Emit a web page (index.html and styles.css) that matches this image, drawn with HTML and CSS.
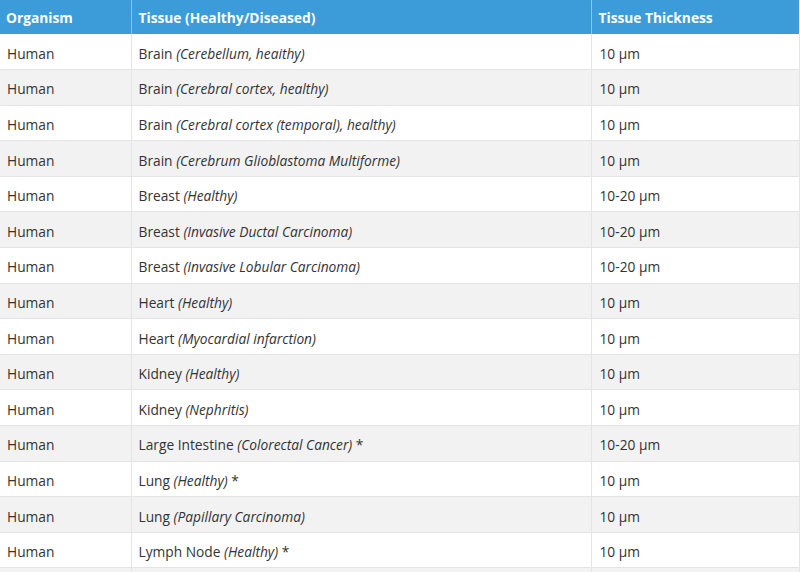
FILE: index.html
```html
<!DOCTYPE html>
<html>
<head>
<meta charset="utf-8">
<link rel="stylesheet" href="styles.css">
</head>
<body>
<table class="tissue-table">
  <colgroup>
    <col class="c1"><col class="c2"><col class="c3">
  </colgroup>
  <thead>
    <tr><th>Organism</th><th>Tissue (Healthy/Diseased)</th><th>Tissue Thickness</th></tr>
  </thead>
  <tbody>
    <tr><td>Human</td><td>Brain <em>(Cerebellum, heaithy)</em></td><td>10 µm</td></tr>
    <tr><td>Human</td><td>Brain <em>(Cerebral cortex, healthy)</em></td><td>10 µm</td></tr>
    <tr><td>Human</td><td>Brain <em>(Cerebral cortex (temporal), healthy)</em></td><td>10 µm</td></tr>
    <tr><td>Human</td><td>Brain <em>(Cerebrum Glioblastoma Multiforme)</em></td><td>10 µm</td></tr>
    <tr><td>Human</td><td>Breast <em>(Healthy)</em></td><td>10-20 µm</td></tr>
    <tr><td>Human</td><td>Breast <em>(Invasive Ductal Carcinoma)</em></td><td>10-20 µm</td></tr>
    <tr><td>Human</td><td>Breast <em>(Invasive Lobular Carcinoma)</em></td><td>10-20 µm</td></tr>
    <tr><td>Human</td><td>Heart <em>(Healthy)</em></td><td>10 µm</td></tr>
    <tr><td>Human</td><td>Heart <em>(Myocardial infarction)</em></td><td>10 µm</td></tr>
    <tr><td>Human</td><td>Kidney <em>(Healthy)</em></td><td>10 µm</td></tr>
    <tr><td>Human</td><td>Kidney <em>(Nephritis)</em></td><td>10 µm</td></tr>
    <tr><td>Human</td><td>Large Intestine <em>(Colorectal Cancer)</em> *</td><td>10-20 µm</td></tr>
    <tr><td>Human</td><td>Lung <em>(Healthy)</em> *</td><td>10 µm</td></tr>
    <tr><td>Human</td><td>Lung <em>(Papillary Carcinoma)</em></td><td>10 µm</td></tr>
    <tr><td>Human</td><td>Lymph Node <em>(Healthy)</em> *</td><td>10 µm</td></tr>
    <tr class="tail"><td></td><td></td><td></td></tr>
  </tbody>
</table>
</body>
</html>
```
FILE: styles.css
```css
html, body {
  margin: 0;
  padding: 0;
  background: #ffffff;
}
body {
  font-family: "Open Sans", "Liberation Sans", sans-serif;
  font-size: 13.75px;
  color: #333333;
  overflow: hidden;
}
.tissue-table {
  width: 799px;
  border-collapse: collapse;
  table-layout: fixed;
}
.c1 { width: 131px; }
.c2 { width: 460px; }
.c3 { width: 208px; }
.tissue-table th {
  background: #3b9cd9;
  color: #ffffff;
  font-weight: 700;
  text-align: left;
  height: 34px;
  padding: 0 7px;
  border-left: 1px solid #8cc4ea;
  box-sizing: border-box;
}
.tissue-table th:first-child {
  border-left: none;
  padding-left: 6px;
}
.tissue-table td {
  height: 35.6px;
  padding: 3px 7px 0;
  border-top: 1px solid #e4e4e4;
  border-left: 1px solid #e4e4e4;
  box-sizing: border-box;
  white-space: nowrap;
}
.tissue-table td:first-child {
  border-left: none;
}
.tissue-table td:last-child {
  border-right: 1px solid #e4e4e4;
  padding-left: 8px;
}
.tissue-table tbody tr:first-child td {
  border-top: none;
}
.tissue-table tbody tr:nth-child(even) td {
  background: #f2f2f2;
}
.tissue-table em {
  font-style: italic;
}
```
